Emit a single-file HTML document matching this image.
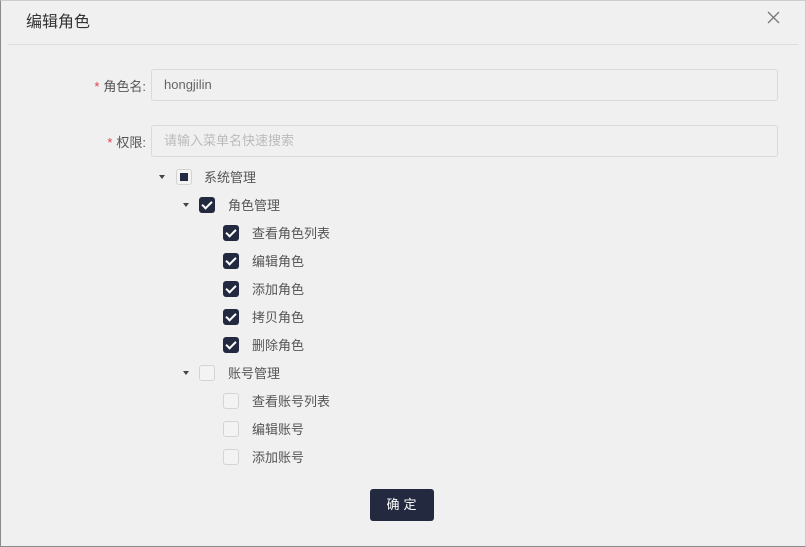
<!DOCTYPE html>
<html><head><meta charset="utf-8"><style>
*{margin:0;padding:0;box-sizing:border-box}
body{width:806px;height:547px;background:#f0f0f0;font-family:"Liberation Sans","Noto Sans CJK SC",sans-serif;color:#555;position:relative;overflow:hidden;font-size:13px;white-space:nowrap}
.frame{position:absolute;left:0;top:0;width:806px;height:547px;border:1px solid #8a8a8a;border-top:1px solid #ccc;border-right:1px solid #ccc}
.t{position:absolute;left:26px;top:8px;font-size:16px;color:#333}
.x{position:absolute;left:767px;top:11px}
.hr{position:absolute;left:8px;right:8px;top:44px;border-top:1px solid #ddd}
.lab{position:absolute;font-size:13px;color:#555;text-align:right;width:140px;left:6px}
.lab b{color:#e03e4d;font-weight:normal;margin-right:4px}
.inp{position:absolute;left:151px;width:627px;height:32px;border:1px solid #d9d9d9;border-radius:3px;padding-left:12px;line-height:30px;font-size:13px;background:#f0f0f0}
.row{position:absolute;height:20px;line-height:16px;font-size:13px;color:#555;width:400px}
.cb{position:absolute;width:16px;height:16px;border-radius:3px;top:0}
.on{background:#232a3f}
.on:after{content:"";position:absolute;left:5px;top:2px;width:4px;height:8px;border:solid #fff;border-width:0 2px 2px 0;transform:rotate(45deg)}
.off{border:1px solid #d4d4d4;background:#f3f3f3}
.ind{border:1px solid #d4d4d4;background:#f3f3f3}
.ind:after{content:"";position:absolute;left:3px;top:3px;width:8px;height:8px;background:#232a3f}
.arr{position:absolute;top:6px;width:0;height:0;border-left:3.5px solid transparent;border-right:3.5px solid transparent;border-top:4px solid #444}
.txt{position:absolute;top:1px}
.btn{position:absolute;left:370px;top:489px;width:64px;height:32px;background:#232a3f;border-radius:3px;color:#fff;text-align:center;line-height:32px;font-size:13px;letter-spacing:4px;padding-left:3px}
</style></head><body>
<div class="frame"></div>
<div class="t">编辑角色</div>
<svg class="x" width="13" height="13" viewBox="0 0 13 13"><path d="M1 1L12 12M12 1L1 12" stroke="#777" stroke-width="1.3" fill="none"/></svg>
<div class="hr"></div>
<div class="lab" style="top:76px"><b>*</b>角色名:</div>
<div class="inp" style="top:69px;color:#666">hongjilin</div>
<div class="lab" style="top:132px"><b>*</b>权限:</div>
<div class="inp" style="top:125px;color:#bbb">请输入菜单名快速搜索</div>

<div class="row" style="top:169px;left:0"><span class="arr" style="left:159px"></span><span class="cb ind" style="left:176px"></span><span class="txt" style="left:204px">系统管理</span></div>
<div class="row" style="top:197px;left:0"><span class="arr" style="left:183px"></span><span class="cb on" style="left:199px"></span><span class="txt" style="left:228px">角色管理</span></div>
<div class="row" style="top:225px;left:0"><span class="cb on" style="left:223px"></span><span class="txt" style="left:252px">查看角色列表</span></div>
<div class="row" style="top:253px;left:0"><span class="cb on" style="left:223px"></span><span class="txt" style="left:252px">编辑角色</span></div>
<div class="row" style="top:281px;left:0"><span class="cb on" style="left:223px"></span><span class="txt" style="left:252px">添加角色</span></div>
<div class="row" style="top:309px;left:0"><span class="cb on" style="left:223px"></span><span class="txt" style="left:252px">拷贝角色</span></div>
<div class="row" style="top:337px;left:0"><span class="cb on" style="left:223px"></span><span class="txt" style="left:252px">删除角色</span></div>
<div class="row" style="top:365px;left:0"><span class="arr" style="left:183px"></span><span class="cb off" style="left:199px"></span><span class="txt" style="left:228px">账号管理</span></div>
<div class="row" style="top:393px;left:0"><span class="cb off" style="left:223px"></span><span class="txt" style="left:252px">查看账号列表</span></div>
<div class="row" style="top:421px;left:0"><span class="cb off" style="left:223px"></span><span class="txt" style="left:252px">编辑账号</span></div>
<div class="row" style="top:449px;left:0"><span class="cb off" style="left:223px"></span><span class="txt" style="left:252px">添加账号</span></div>
<div class="btn">确定</div>
</body></html>
